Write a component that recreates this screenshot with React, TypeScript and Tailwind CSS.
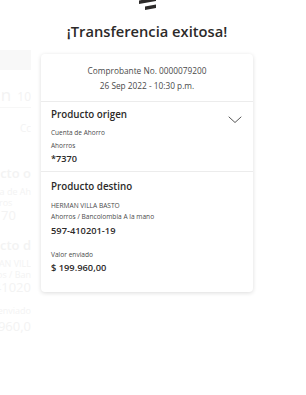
const font = { fontFamily: '"Open Sans", "Noto Sans", sans-serif' };

function Ghost() {
  // faded previous slide peeking in from the left edge
  return (
    <div className="absolute left-0 top-[50px] w-[31px] h-[300px] overflow-hidden pointer-events-none select-none whitespace-nowrap">
      <div className="ml-[-110px] w-[141px] text-[#f3f3f3]">
        <div className="h-[20px] bg-[#f8f8f8]" />
        <div className="flex items-end justify-end gap-[6px] h-[38px] border-b border-[#f7f7f7] pb-[4px]">
          <span className="text-[17px] leading-none">n</span>
          <span className="text-[12px] leading-none">10</span>
        </div>
        <div className="text-right text-[10px] leading-[12px] mt-[14px]">Cc</div>
        <div className="mt-[32px] text-[13px] font-semibold leading-[15px] text-right">ducto o</div>
        <div className="mt-[5px] text-[9px] leading-[11px] text-right">ta de Ah</div>
        <div className="text-[9px] leading-[11px] pl-[109px]">ros</div>
        <div className="text-[13px] leading-[15px] pl-[111px]">70</div>
        <div className="mt-[15px] text-[13px] font-semibold leading-[15px] text-right">ducto d</div>
        <div className="mt-[5px] text-[9px] leading-[11px] text-right">MAN VILL</div>
        <div className="text-[9px] leading-[11px] text-right">ros / Ban</div>
        <div className="text-[13px] leading-[15px] text-right">-41020</div>
        <div className="mt-[10px] text-[9px] leading-[11px] text-right">enviado</div>
        <div className="mt-[3px] text-[13px] leading-[15px] text-right">99.960,0</div>
      </div>
    </div>
  );
}

function Logo() {
  return (
    <svg width="24" height="13" viewBox="0 0 24 13" className="absolute left-[136px] top-0">
      <path d="M3 0.5 L20 -2.5 L20 1 L3 4 Z" fill="#2c2a29" />
      <path d="M9 6.5 L20 4.5 L20 8 L9 10 Z" fill="#2c2a29" />
    </svg>
  );
}

export default function App() {
  return (
    <div className="relative w-[306px] h-[395px] bg-white overflow-hidden text-[#2c2a29]" style={font}>
      <Ghost />
      <Logo />
      <div className="ml-[41px] w-[212px] flex flex-col items-center pt-[20px]">
        <h1 className="text-[14.7px] font-semibold leading-[22px] whitespace-nowrap">¡Transferencia exitosa!</h1>
        <div className="mt-[12px] w-[212px] bg-white rounded-[4px] shadow-[0_1px_4px_rgba(0,0,0,0.14)]">
          <div className="flex flex-col items-center pt-[9px] pb-[8px] border-b border-[#ececec] text-[8.3px] leading-[15px] text-[#4a4a4a]">
            <span>Comprobante No. 0000079200</span>
            <span>26 Sep 2022 - 10:30 p.m.</span>
          </div>
          <div className="relative px-[10px] pt-[6px] pb-[6px] border-b border-[#ececec]">
            <div className="text-[9.8px] font-semibold leading-[14px]">Producto origen</div>
            <svg width="14" height="8" viewBox="0 0 14 8" className="absolute right-[11px] top-[14px]" fill="none">
              <path d="M1 1 L7 6.5 L13 1" stroke="#555" strokeWidth="1" strokeLinecap="round" strokeLinejoin="round" />
            </svg>
            <div className="mt-[4px] text-[6.5px] leading-[13px] text-[#4a4a4a]">Cuenta de Ahorro</div>
            <div className="text-[6.5px] leading-[13px] text-[#4a4a4a]">Ahorros</div>
            <div className="text-[9.2px] font-semibold leading-[13px]">*7370</div>
          </div>
          <div className="px-[10px] pt-[8px] pb-[17px]">
            <div className="text-[9.8px] font-semibold leading-[14px]">Producto destino</div>
            <div className="mt-[6px] text-[6.6px] leading-[11px] text-[#4a4a4a]">HERMAN VILLA BASTO</div>
            <div className="text-[6.6px] leading-[11px] text-[#4a4a4a]">Ahorros / Bancolombia A la mano</div>
            <div className="mt-[2px] text-[9.3px] font-semibold leading-[14px]">597-410201-19</div>
            <div className="mt-[11px] text-[6.6px] leading-[12px] text-[#4a4a4a]">Valor enviado</div>
            <div className="text-[9.3px] font-semibold leading-[14px]">$ 199.960,00</div>
          </div>
        </div>
      </div>
    </div>
  );
}
